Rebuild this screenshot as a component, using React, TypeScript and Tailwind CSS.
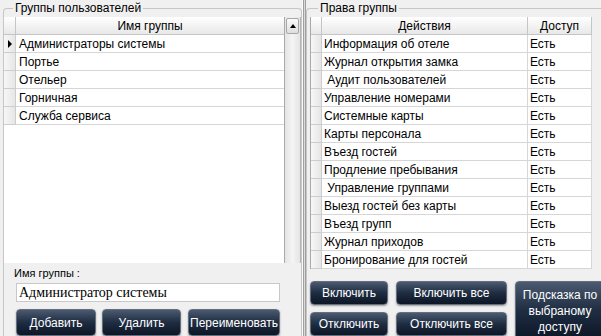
import React from "react";

const groups = ["Администраторы системы", "Портье", "Отельер", "Горничная", "Служба сервиса"];

const rights = [
  "Информация об отеле",
  "Журнал открытия замка",
  " Аудит пользователей",
  "Управление номерами",
  "Системные карты",
  "Карты персонала",
  "Въезд гостей",
  "Продление пребывания",
  " Управление группами",
  "Выезд гостей без карты",
  "Въезд групп",
  "Журнал приходов",
  "Бронирование для гостей",
];

const NavButton = ({ children, className }: { children: React.ReactNode; className: string }) => {
  return (
    <button
      className={`flex items-center justify-center rounded-[4px] border border-[#646e7c] bg-linear-to-b from-[#4b5a70] via-[#1f2d42] to-[#0c1626] text-center text-[12px] leading-[16px] text-white shadow-[0_1px_2px_rgba(0,0,0,0.35)] ${className}`}
    >
      {children}
    </button>
  );
};

const RowHead = ({ active }: { active?: boolean }) => (
  <div className="flex h-full w-[12px] shrink-0 items-center justify-center border-r border-b border-[#cdcdcd] bg-linear-to-r from-[#f7f7f7] to-[#e6e6e6]">
    {active && <div className="ml-[1px] h-0 w-0 border-y-[4px] border-l-[4px] border-y-transparent border-l-black"></div>}
  </div>
);

const App = () => {
  return (
    <div className="flex h-[336px] w-[601px] overflow-hidden bg-[#f0f0f0] font-['Liberation_Sans',Arial,sans-serif] text-[12px] text-black">
      {/* left panel */}
      <div className="flex w-[302px] shrink-0 flex-col pt-px pl-[3px]">
        <fieldset className="flex min-h-0 flex-1 flex-col rounded-t-[4px] border border-b-0 border-[#c6c6c6]">
          <legend className="ml-[9px] px-[2px] text-[12px] leading-[14px]">Группы пользователей</legend>
          <div className="mt-[2px] flex h-[250px] bg-white">
            <div className="flex min-w-0 flex-1 flex-col border-r border-[#a9a9a9]">
              <div className="flex h-[18px] shrink-0">
                <div className="w-[12px] border-r border-b border-[#c5c5c5] bg-linear-to-b from-white to-[#e8e8e8]"></div>
                <div className="flex flex-1 items-center justify-center border-b border-[#c5c5c5] bg-linear-to-b from-white to-[#e8e8e8]">
                  Имя группы
                </div>
              </div>
              {groups.map((g, i) => (
                <div key={i} className="flex h-[18px] shrink-0">
                  <RowHead active={i === 0} />
                  <div className="flex flex-1 items-center border-b border-[#d6d6d6] pl-[3px]">{g}</div>
                </div>
              ))}
            </div>
            <div className="flex w-[16px] shrink-0 flex-col border-r border-[#b5b5b5] bg-linear-to-r from-[#e4e4e4] via-[#f4f4f4] to-[#e4e4e4]">
              <div className="mx-px mt-px flex h-[16px] items-center justify-center rounded-[2px] border border-[#a6a6a6] bg-linear-to-b from-[#fbfbfb] to-[#dedede]">
                <div className="h-0 w-0 border-x-[3px] border-b-[4px] border-x-transparent border-b-black"></div>
              </div>
            </div>
          </div>
          <div className="flex flex-col">
            <div className="pt-[4px] pl-[10px] text-[11px] leading-[12px]">Имя группы :</div>
            <div className="mt-[4px] ml-[12px] flex h-[19px] w-[264px] items-center border border-[#c8c8c8] bg-white pl-[2px] font-['Liberation_Serif',serif] text-[14px]">
              Администратор системы
            </div>
            <div className="mt-[7px] ml-[12px] flex">
              <NavButton className="h-[27px] w-[80px]">Добавить</NavButton>
              <NavButton className="ml-[6px] h-[27px] w-[79px]">Удалить</NavButton>
              <NavButton className="ml-[7px] h-[27px] w-[92px]">Переименовать</NavButton>
            </div>
          </div>
        </fieldset>
      </div>

      {/* splitter */}
      <div className="flex w-[4px] shrink-0">
        <div className="w-px bg-[#fafafa]"></div>
        <div className="w-px bg-[#9f9f9f]"></div>
        <div className="w-px bg-[#dcdcdc]"></div>
        <div className="w-px bg-[#9f9f9f]"></div>
      </div>

      {/* right panel */}
      <div className="flex min-w-0 flex-1 flex-col pt-px">
        <fieldset className="flex min-h-0 flex-1 flex-col rounded-tl-[4px] border border-r-0 border-b-0 border-[#c6c6c6]">
          <legend className="ml-[11px] px-[2px] text-[12px] leading-[14px]">Права группы</legend>
          <div className="mt-[2px] ml-[3px] flex w-[282px] flex-col border-l border-[#a9a9a9] bg-white">
            <div className="flex h-[18px]">
              <div className="w-[11px] border-r border-b border-[#c5c5c5] bg-linear-to-b from-white to-[#e8e8e8]"></div>
              <div className="flex w-[206px] items-center justify-center border-r border-b border-[#c5c5c5] bg-linear-to-b from-white to-[#e8e8e8]">
                Действия
              </div>
              <div className="flex w-[64px] items-center justify-center border-r border-b border-[#c5c5c5] bg-linear-to-b from-white to-[#e8e8e8]">
                Доступ
              </div>
            </div>
            {rights.map((r, i) => (
              <div key={i} className="flex h-[18px]">
                <div className="w-[11px] border-r border-b border-[#cdcdcd] bg-linear-to-r from-[#f7f7f7] to-[#e6e6e6]"></div>
                <div className="flex w-[206px] items-center border-r border-b border-[#d6d6d6] pl-[2px] whitespace-pre">{r}</div>
                <div className="flex w-[64px] items-center border-r border-b border-[#d6d6d6] pl-[2px]">Есть</div>
              </div>
            ))}
          </div>
          <div className="mt-[12px] ml-[3px] flex">
            <div className="grid grid-cols-[78px_111px] grid-rows-[24px_24px] gap-x-[8px] gap-y-[7px]">
              <NavButton className="h-[24px]">Включить</NavButton>
              <NavButton className="h-[24px]">Включить все</NavButton>
              <NavButton className="h-[24px]">Отключить</NavButton>
              <NavButton className="h-[24px]">Отключить все</NavButton>
            </div>
            <NavButton className="ml-[8px] h-[60px] w-[90px] shrink-0 px-0">
              Подсказка по выбраному доступу
            </NavButton>
          </div>
        </fieldset>
      </div>
    </div>
  );
};

export default App;
